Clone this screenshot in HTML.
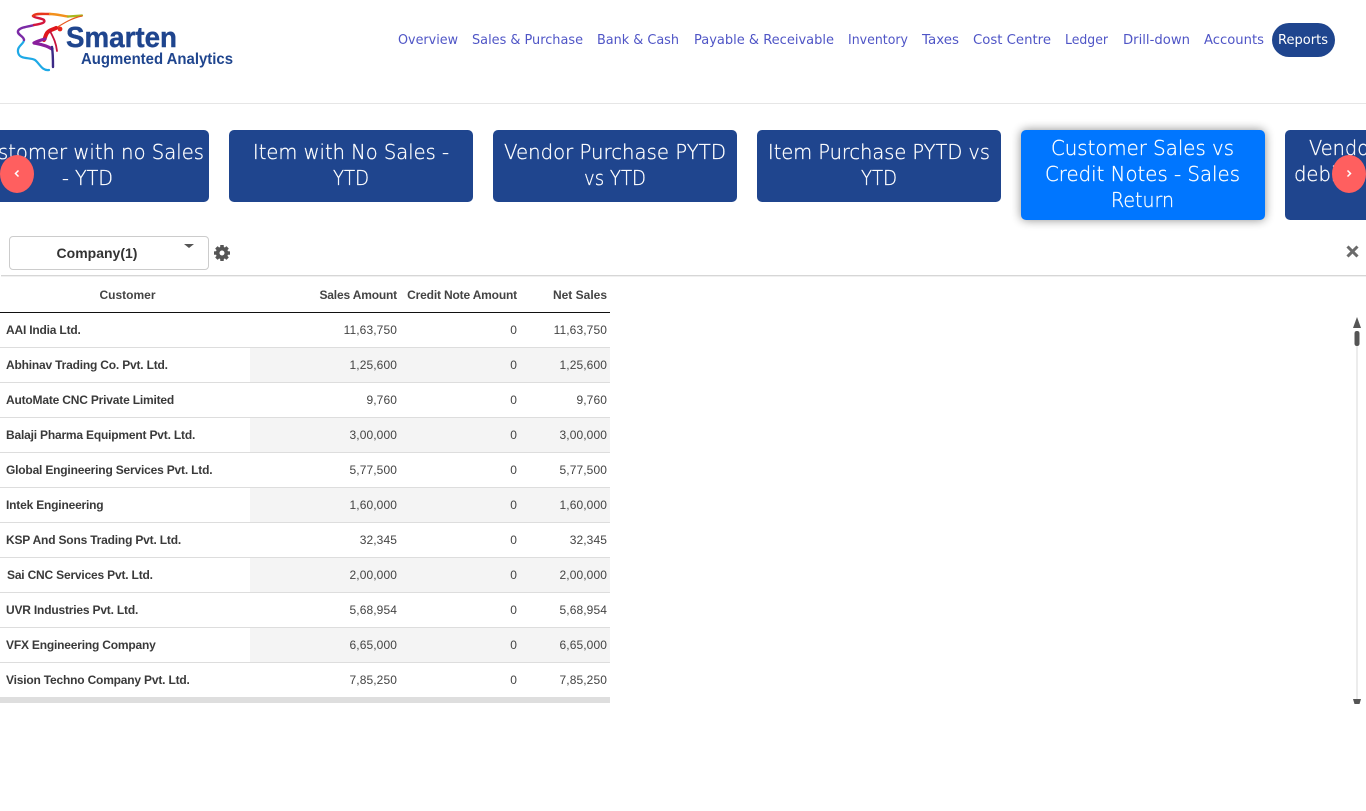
<!DOCTYPE html>
<html>
<head>
<meta charset="utf-8">
<title>Smarten Augmented Analytics</title>
<style>
html,body{margin:0;padding:0;background:#fff;width:1366px;height:811px;overflow:hidden}
body{position:relative;font-family:"Liberation Sans",Arial,sans-serif}
svg.page{position:absolute;left:0;top:0}
.p{font-family:"DejaVu Sans",sans-serif}
.nav{font-size:13.4px;fill:#4f55c6}
.card{font-size:20.5px;fill:#fff;stroke:#fff;stroke-width:.3px;font-weight:200;font-family:"DejaVu Sans ExtraLight","DejaVu Sans",sans-serif}
.hdrline{position:absolute;left:0;top:103px;width:1366px;height:1px;background:#e6e6e6}
.dd{position:absolute;left:9px;top:236px;height:32px;border:1px solid #ccc;border-radius:4px;text-align:center;font-weight:700;font-size:14px;line-height:33px;color:#333;padding-right:24px;box-sizing:content-box;width:174px}
.caret{position:absolute;left:184px;top:244px;width:0;height:0;border-left:5px solid transparent;border-right:5px solid transparent;border-top:4px solid #555}
.rule{position:absolute;left:1px;top:275px;width:1365px;height:1px;background:#d6d6d6}
.rule2{position:absolute;left:1px;top:276px;width:1365px;height:1px;background:#f0f0f0}
table{position:absolute;left:0;top:277px;width:610px;border-collapse:separate;border-spacing:0;table-layout:fixed;font-size:12px;color:#333}
th{padding:1px 3px 0 0;text-align:right;font-weight:700;color:#444;border-bottom:1px solid #111;box-sizing:border-box;height:36px;letter-spacing:-.17px}
th:first-child{text-align:center;padding-left:5px;padding-right:0;letter-spacing:0}
th:last-child{letter-spacing:0}
td{height:35px;box-sizing:border-box;padding:0 3px 0 0;text-align:right;border-bottom:1px solid #ddd;color:#444;letter-spacing:.1px}
td:first-child{text-align:left;padding-left:6px;font-weight:700;color:#3a3a3a;letter-spacing:-.19px}
tr.g td:not(:first-child){background:#f4f4f4}
tr:last-child td{border-bottom:1px solid transparent}
.bar{position:absolute;left:0;top:697px;width:610px;height:6px;background:#dedede}
</style>
</head>
<body>
<div class="hdrline"></div>

<svg class="page" width="1366" height="240" viewBox="0 0 1366 240">
  <!-- logo -->
  <g fill="none" stroke-linecap="round" stroke-linejoin="round">
    <path d="M49 70 C42 71 40 64 35 60 C30 57 19 60 18 52 C17 46 24 44 24 40" stroke="#1ea9e6" stroke-width="2.2"/>
    <path d="M24 40 C24 36 17 35 18 31 C20 27 28 27 34 25" stroke="#7b2aa6" stroke-width="2.4"/>
    <path d="M34 25 C40 24 46 23 44 20 C42 18 34 18 33 16" stroke="#d4163c" stroke-width="2.4"/>
    <path d="M33 16 C35 13 43 14 50 14" stroke="#e8361c" stroke-width="2.4"/>
    <path d="M50 14 C57 14 62 16 68 16.5" stroke="#f2901c" stroke-width="2.4"/>
    <path d="M68 16.5 L82 15.5" stroke="#a8b81e" stroke-width="2.2"/>
    <path d="M82 16 C72 18 64 23 56 28" stroke="#e8561c" stroke-width="1.2"/>
    <path d="M56 28 C52 30 49 30 47 33 C45 36 45 39 44 40" stroke="#e0161c" stroke-width="4"/>
    <path d="M50 31 C53 37 56 42 57 51" stroke="#c8123c" stroke-width="1.8"/>
    <path d="M45 39 C41 40 37 41 34 43 C39 44 46 45 52 49" stroke="#8a1f9c" stroke-width="3.2"/>
    <path d="M52 47 C53 54 53 60 53 67" stroke="#3c2a86" stroke-width="2.4"/>
  </g>
  <circle cx="60" cy="29" r="2.4" fill="#e8261c"/>
  <text x="66" y="47" font-family="'Liberation Sans',sans-serif" font-weight="700" font-size="29" fill="#1f458e" stroke="#1f458e" stroke-width=".4" textLength="111" lengthAdjust="spacingAndGlyphs">Smarten</text>
  <text x="81" y="64" font-family="'Liberation Sans',sans-serif" font-weight="700" font-size="16" fill="#1f458e" textLength="152" lengthAdjust="spacingAndGlyphs">Augmented Analytics</text>

  <!-- nav -->
  <g class="p nav">
    <text x="398" y="44" textLength="60" lengthAdjust="spacingAndGlyphs">Overview</text>
    <text x="472" y="44" textLength="111" lengthAdjust="spacingAndGlyphs">Sales &amp; Purchase</text>
    <text x="597" y="44" textLength="82" lengthAdjust="spacingAndGlyphs">Bank &amp; Cash</text>
    <text x="694" y="44" textLength="140" lengthAdjust="spacingAndGlyphs">Payable &amp; Receivable</text>
    <text x="848" y="44" textLength="60" lengthAdjust="spacingAndGlyphs">Inventory</text>
    <text x="922" y="44" textLength="37" lengthAdjust="spacingAndGlyphs">Taxes</text>
    <text x="973" y="44" textLength="78" lengthAdjust="spacingAndGlyphs">Cost Centre</text>
    <text x="1065" y="44" textLength="43" lengthAdjust="spacingAndGlyphs">Ledger</text>
    <text x="1123" y="44" textLength="67" lengthAdjust="spacingAndGlyphs">Drill-down</text>
    <text x="1204" y="44" textLength="60" lengthAdjust="spacingAndGlyphs">Accounts</text>
  </g>
  <rect x="1272" y="23" width="63" height="34" rx="17" fill="#1f458e"/>
  <text class="p" x="1278" y="44" font-size="13.4" fill="#fff" textLength="50" lengthAdjust="spacingAndGlyphs">Reports</text>

  <!-- cards -->
  <defs>
    <filter id="sh" x="-20%" y="-30%" width="140%" height="160%">
      <feGaussianBlur stdDeviation="5"/>
    </filter>
  </defs>
  <rect x="-35" y="130" width="244" height="72" rx="5" fill="#1f458e"/>
  <rect x="229" y="130" width="244" height="72" rx="5" fill="#1f458e"/>
  <rect x="493" y="130" width="244" height="72" rx="5" fill="#1f458e"/>
  <rect x="757" y="130" width="244" height="72" rx="5" fill="#1f458e"/>
  <rect x="1021" y="130" width="244" height="90" rx="5" fill="#000" opacity=".45" filter="url(#sh)"/>
  <rect x="1021" y="130" width="244" height="90" rx="5" fill="#0076ff"/>
  <rect x="1285" y="130" width="244" height="90" rx="5" fill="#1f458e"/>

  <g class="card">
    <text x="-2" y="159" textLength="206" lengthAdjust="spacingAndGlyphs">stomer with no Sales</text>
    <text x="62" y="185" textLength="51" lengthAdjust="spacingAndGlyphs">- YTD</text>
    <text x="253" y="159" textLength="196" lengthAdjust="spacingAndGlyphs">Item with No Sales -</text>
    <text x="333" y="185" textLength="36" lengthAdjust="spacingAndGlyphs">YTD</text>
    <text x="504" y="159" textLength="222" lengthAdjust="spacingAndGlyphs">Vendor Purchase PYTD</text>
    <text x="584" y="185" textLength="62" lengthAdjust="spacingAndGlyphs">vs YTD</text>
    <text x="768" y="159" textLength="222" lengthAdjust="spacingAndGlyphs">Item Purchase PYTD vs</text>
    <text x="861" y="185" textLength="36" lengthAdjust="spacingAndGlyphs">YTD</text>
    <text x="1051" y="155" textLength="183" lengthAdjust="spacingAndGlyphs">Customer Sales vs</text>
    <text x="1045" y="181" textLength="195" lengthAdjust="spacingAndGlyphs">Credit Notes - Sales</text>
    <text x="1111" y="207" textLength="63" lengthAdjust="spacingAndGlyphs">Return</text>
    <text x="1309" y="155" textLength="68" lengthAdjust="spacingAndGlyphs">Vendor</text>
    <text x="1294" y="181" textLength="50" lengthAdjust="spacingAndGlyphs">debit</text>
  </g>

  <!-- carousel buttons -->
  <ellipse cx="17" cy="174" rx="17" ry="19" fill="#ff5f5f"/>
  <path d="M18.5 170.5 L15.5 173.5 L18.5 176.5" fill="none" stroke="#fff" stroke-width="1.5"/>
  <ellipse cx="1349" cy="174" rx="17" ry="19" fill="#ff5f5f"/>
  <path d="M1347.5 170.5 L1350.5 173.5 L1347.5 176.5" fill="none" stroke="#fff" stroke-width="1.5"/>
</svg>

<!-- filter row -->
<div class="dd">Company(1)</div>
<div class="caret"></div>
<svg style="position:absolute;left:213px;top:244px" width="18" height="18" viewBox="0 0 18 18">
  <g fill="#555">
    <circle cx="9" cy="9" r="6.2"/>
    <rect x="7.2" y="1" width="3.6" height="16" rx=".6"/>
    <rect x="7.2" y="1" width="3.6" height="16" rx=".6" transform="rotate(45 9 9)"/>
    <rect x="7.2" y="1" width="3.6" height="16" rx=".6" transform="rotate(90 9 9)"/>
    <rect x="7.2" y="1" width="3.6" height="16" rx=".6" transform="rotate(135 9 9)"/>
  </g>
  <circle cx="9" cy="9" r="2.5" fill="#fff"/>
</svg>
<svg style="position:absolute;left:1345px;top:244px" width="15" height="15" viewBox="0 0 15 15">
  <path d="M2.5 2.5 L12.5 12.5 M12.5 2.5 L2.5 12.5" stroke="#6b6b6b" stroke-width="3" fill="none"/>
</svg>
<div class="rule"></div>
<div class="rule2"></div>

<!-- table -->
<table>
  <colgroup><col style="width:250px"><col style="width:150px"><col style="width:120px"><col style="width:90px"></colgroup>
  <tr><th>Customer</th><th>Sales Amount</th><th>Credit Note Amount</th><th>Net Sales</th></tr>
  <tr><td>AAI India Ltd.</td><td>11,63,750</td><td>0</td><td>11,63,750</td></tr>
  <tr class="g"><td>Abhinav Trading Co. Pvt. Ltd.</td><td>1,25,600</td><td>0</td><td>1,25,600</td></tr>
  <tr><td>AutoMate CNC Private Limited</td><td>9,760</td><td>0</td><td>9,760</td></tr>
  <tr class="g"><td>Balaji Pharma Equipment Pvt. Ltd.</td><td>3,00,000</td><td>0</td><td>3,00,000</td></tr>
  <tr><td>Global Engineering Services Pvt. Ltd.</td><td>5,77,500</td><td>0</td><td>5,77,500</td></tr>
  <tr class="g"><td>Intek Engineering</td><td>1,60,000</td><td>0</td><td>1,60,000</td></tr>
  <tr><td>KSP And Sons Trading Pvt. Ltd.</td><td>32,345</td><td>0</td><td>32,345</td></tr>
  <tr class="g"><td style="padding-left:7px">Sai CNC Services Pvt. Ltd.</td><td>2,00,000</td><td>0</td><td>2,00,000</td></tr>
  <tr><td>UVR Industries Pvt. Ltd.</td><td>5,68,954</td><td>0</td><td>5,68,954</td></tr>
  <tr class="g"><td>VFX Engineering Company</td><td>6,65,000</td><td>0</td><td>6,65,000</td></tr>
  <tr><td>Vision Techno Company Pvt. Ltd.</td><td>7,85,250</td><td>0</td><td>7,85,250</td></tr>
</table>
<div class="bar"></div>

<!-- vertical slider -->
<svg style="position:absolute;left:1350px;top:314px" width="16" height="394" viewBox="0 0 16 394">
  <line x1="7" y1="30" x2="7" y2="385" stroke="#d8d8d8" stroke-width="1"/>
  <path d="M7 3 L11 14 L3 14 Z" fill="#555"/>
  <rect x="4.5" y="17" width="5" height="15" rx="2.2" fill="#555"/>
  <path d="M3 385 L11 385 L9.5 390 L4.5 390 Z" fill="#555"/>
</svg>
</body>
</html>
